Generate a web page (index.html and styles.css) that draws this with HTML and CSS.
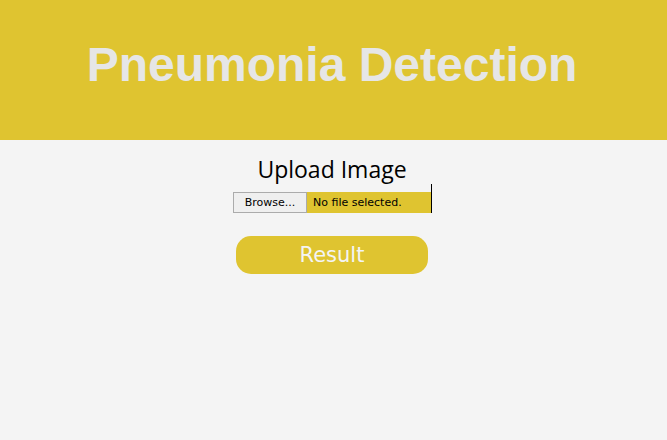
FILE: index.html
```html
<!DOCTYPE html>
<html>
<head>
<meta charset="utf-8">
<link rel="stylesheet" href="styles.css">
</head>
<body>
<header class="header">
  <h1 class="title">Pneumonia Detection</h1>
</header>
<main class="content">
  <h2 class="upload-label">Upload Image</h2>
  <div class="file-input">
    <span class="browse">Browse...</span>
    <span class="file-name">No file selected.</span>
    <span class="caret"></span>
  </div>
  <button class="result">Result</button>
</main>
</body>
</html>
```
FILE: styles.css
```css
html, body {
  margin: 0;
  padding: 0;
  background: #f4f4f4;
}
body {
  padding-right: 3px;
}
.header {
  height: 140px;
  margin-right: -3px;
  padding-right: 3px;
  box-sizing: border-box;
  background: #dfc430;
  display: flex;
  align-items: center;
  justify-content: center;
}
.title {
  margin: 0 0 12px 0;
  font-family: "Liberation Sans", Arial, sans-serif;
  font-weight: bold;
  font-size: 48px;
  color: #e6e6e6;
}
.content {
  display: flex;
  flex-direction: column;
  align-items: center;
}
.upload-label {
  margin: 14px 0 0 0;
  font-family: "Open Sans", sans-serif;
  font-weight: normal;
  font-size: 23px;
  line-height: 30px;
  color: #000;
}
.file-input {
  position: relative;
  display: flex;
  align-items: center;
  width: 198px;
  height: 21px;
  margin-top: 8px;
  background: #dfc430;
  font-family: "DejaVu Sans", Tahoma, sans-serif;
  font-size: 11px;
  color: #000;
}
.browse {
  box-sizing: border-box;
  height: 21px;
  width: 74px;
  display: flex;
  align-items: center;
  justify-content: center;
  background: #efefef;
  border: 1px solid #ababab;
}
.file-name {
  margin-left: 6px;
}
.caret {
  position: absolute;
  right: -1px;
  top: -8px;
  bottom: 0;
  width: 1px;
  background: #000;
}
.result {
  margin-top: 23px;
  width: 192px;
  height: 38px;
  border: none;
  border-radius: 15px;
  background: #dfc430;
  color: #f4f4f4;
  font-family: "DejaVu Sans", Tahoma, sans-serif;
  font-size: 21px;
  padding: 0;
}
```
